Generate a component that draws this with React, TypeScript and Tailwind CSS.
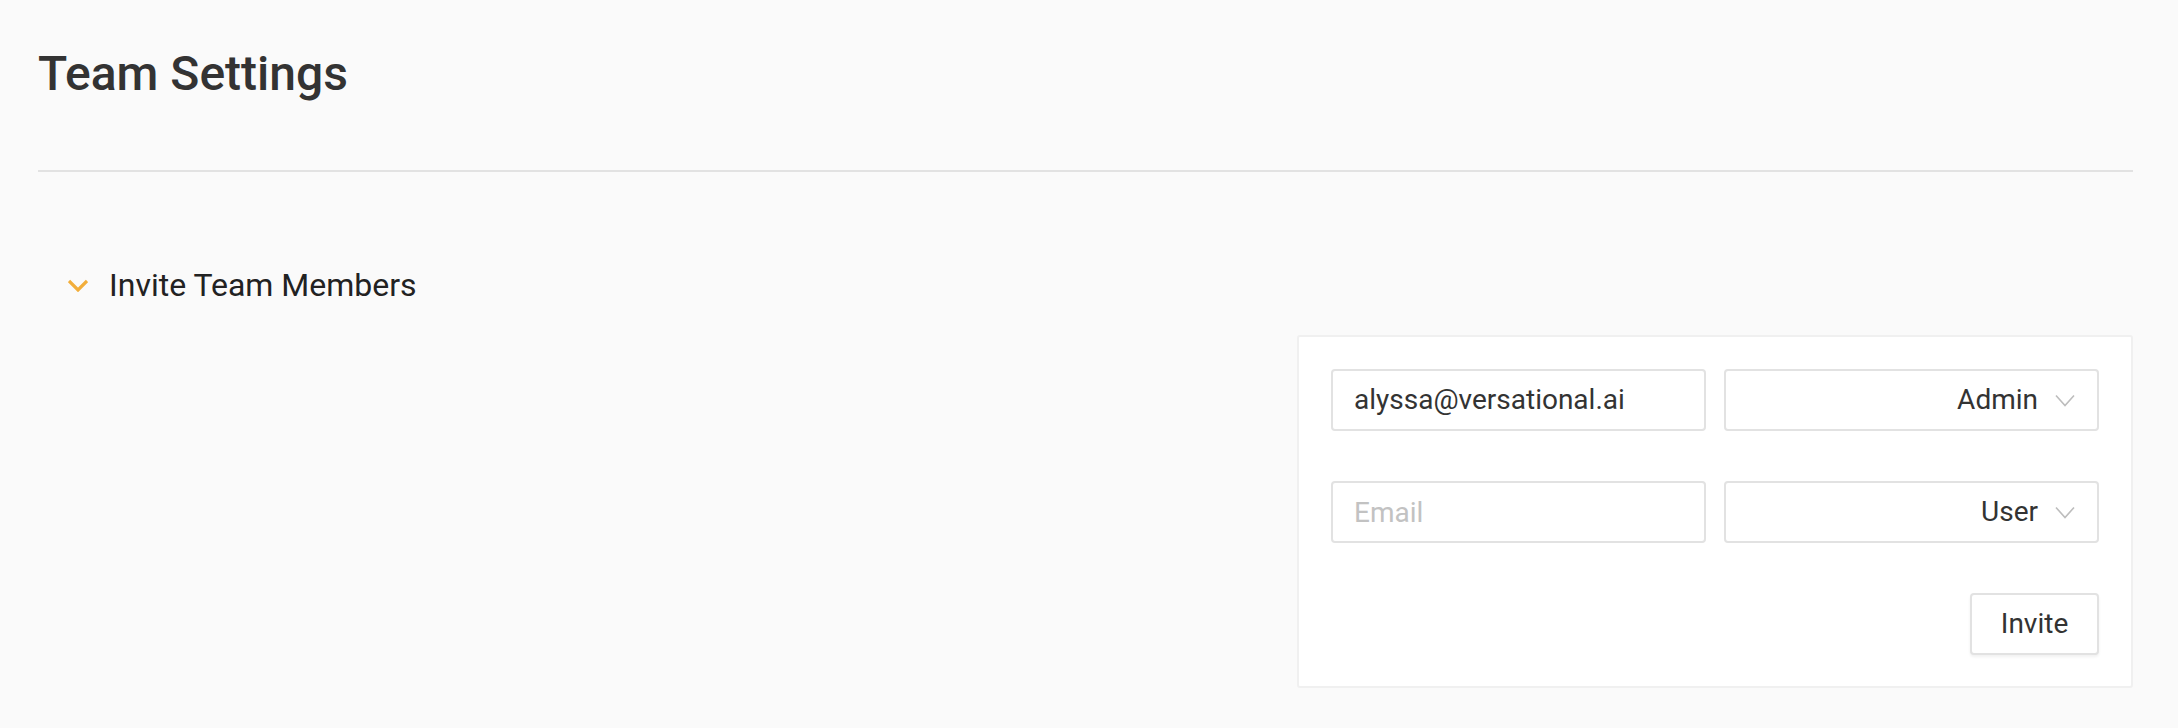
import { useState } from "react";

function ChevronDown({ className }: { className?: string }) {
  return (
    <svg viewBox="0 0 20 12" className={className} fill="none">
      <path d="M1 1.5l9 9 9-9" stroke="currentColor" strokeWidth="3.2" strokeLinejoin="miter" />
    </svg>
  );
}

function RoleSelect({ value }: { value: string }) {
  return (
    <div className="flex h-[62px] w-[375px] items-center justify-end rounded-[4px] border-2 border-[#e2e2e2] bg-white pr-[22px]">
      <span className="text-[28px] text-[#333]">{value}</span>
      <svg viewBox="0 0 20 12" className="ml-[17px] h-[13px] w-[20px]" fill="none">
        <path d="M1 1l9 10 9-10" stroke="#bdbdbd" strokeWidth="1.6" />
      </svg>
    </div>
  );
}

function App() {
  const [email, setEmail] = useState("");
  const members = [
    { email: "alyssa@versational.ai", role: "Admin" },
  ];

  return (
    <div className="min-h-screen bg-[#fafafa] pl-[38px] pr-[45px] font-['Roboto',sans-serif]">
      <div className="border-b-2 border-[#e2e2e2] pt-[50px] pb-[72px]">
        <h1 className="text-[48px] font-medium leading-[48px] text-[#333]">
          Team Settings
        </h1>
      </div>

      <div className="mt-[97px] flex items-center pl-[30px]">
        <ChevronDown className="h-[13px] w-[20px] text-[#f2ae3b]" />
        <h3 className="ml-[21px] text-[32px] leading-[32px] text-[#222]">
          Invite Team Members
        </h3>
      </div>

      <div className="mt-[34px] flex justify-end">
        <div className="w-[836px] rounded-[3px] border-2 border-[#f0f0f0] bg-white px-[32px] pt-[32px] pb-[31px]">
          <div className="flex flex-col gap-[50px]">
            {members.map((m) => (
              <div className="flex justify-between" key={m.email}>
                <div className="flex h-[62px] w-[375px] items-center rounded-[4px] border-2 border-[#e2e2e2] bg-white pl-[21px] text-[28px] text-[#333]">
                  {m.email}
                </div>
                <RoleSelect value={m.role} />
              </div>
            ))}
            <div className="flex justify-between">
              <input
                value={email}
                onChange={(e) => setEmail(e.target.value)}
                placeholder="Email"
                className="h-[62px] w-[375px] rounded-[4px] border-2 border-[#e2e2e2] bg-white pl-[21px] text-[28px] text-[#333] outline-0 placeholder:text-[#c2c2c2]"
              />
              <RoleSelect value="User" />
            </div>
            <div className="flex justify-end">
              <button className="h-[62px] w-[129px] rounded-[4px] border-2 border-[#e2e2e2] bg-white text-[28px] text-[#333] shadow-[0_2px_3px_rgba(0,0,0,0.06)]">
                Invite
              </button>
            </div>
          </div>
        </div>
      </div>
    </div>
  );
}

export default App;
